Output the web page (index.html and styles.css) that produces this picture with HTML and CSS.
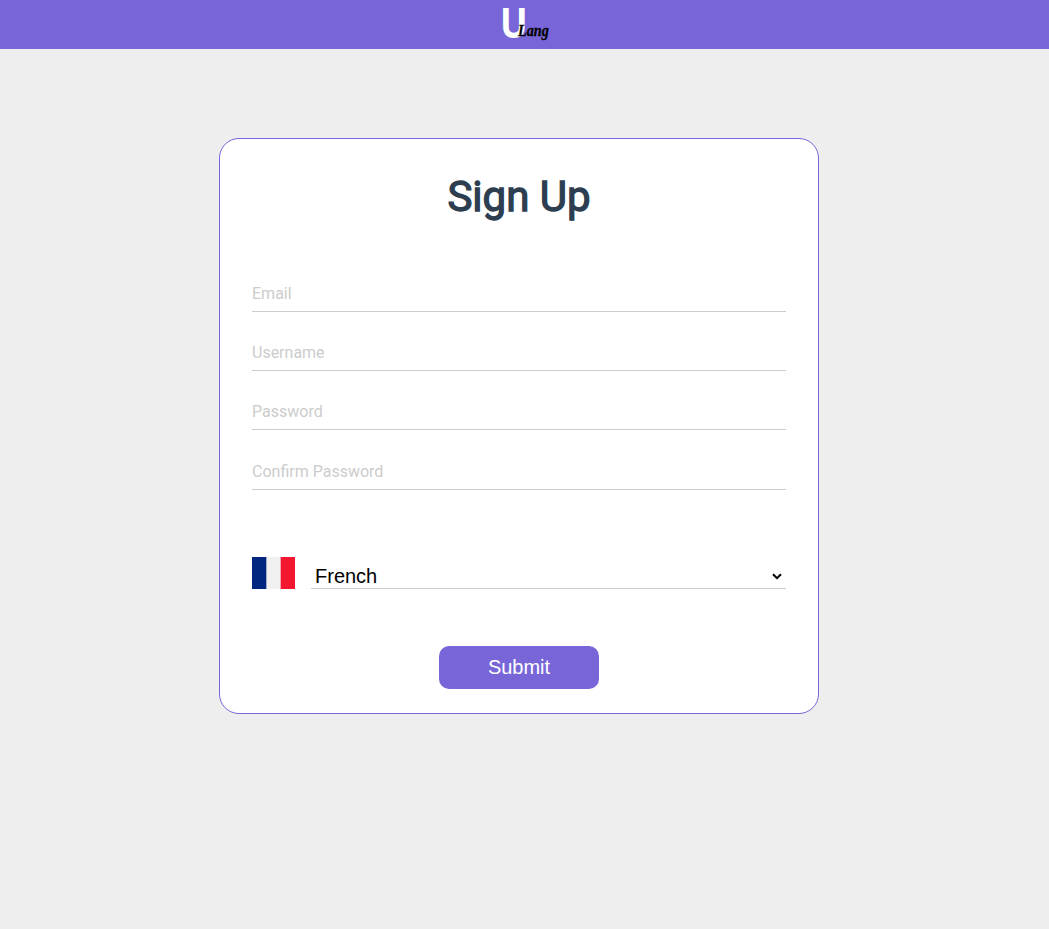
FILE: index.html
```html
<!DOCTYPE html>
<html lang="en">
<head>
<meta charset="utf-8">
<title>Sign Up</title>
<link rel="stylesheet" href="styles.css">
</head>
<body>
<header class="topbar">
  <a class="logo"><span class="logo-u">U</span><span class="logo-lang">Lang</span></a>
</header>
<main class="page">
  <form class="card">
    <h1 class="title">Sign Up</h1>
    <div class="fields">
      <input class="field" type="text" placeholder="Email">
      <input class="field" type="text" placeholder="Username">
      <input class="field" type="password" placeholder="Password">
      <input class="field field-last" type="password" placeholder="Confirm Password">
    </div>
    <div class="language">
      <svg class="flag" viewBox="0 0 43 32" width="43" height="32">
        <rect width="43" height="32" fill="#f0f0f0"/>
        <rect width="14.33" height="32" fill="#00267f"/>
        <rect x="28.67" width="14.33" height="32" fill="#f31830"/>
      </svg>
      <div class="select-wrap">
        <select class="select"><option>French</option></select>
        <svg class="chevron" viewBox="0 0 10 7" width="10" height="7"><path d="M1 1.2 5 5.2 9 1.2" fill="none" stroke="#000" stroke-width="2"/></svg>
      </div>
    </div>
    <button class="submit" type="button">Submit</button>
  </form>
</main>
</body>
</html>
```
FILE: styles.css
```css
* { box-sizing: border-box; }
body {
  margin: 0;
  min-height: 929px;
  background: #eee;
  font-family: Roboto, sans-serif;
}
.topbar {
  height: 49px;
  background: #7866d8;
  display: flex;
  justify-content: center;
}
.logo {
  position: relative;
  width: 49px;
  height: 49px;
}
.logo-u {
  position: absolute;
  left: 0;
  top: 0;
  font: 700 42px/44px "Open Sans", sans-serif;
  transform: scaleX(.87);
  transform-origin: 0 50%;
  color: #fff;
}
.logo-lang {
  position: absolute;
  left: 18px;
  top: 19px;
  font: italic 700 17px/24px "Liberation Serif", serif;
  transform: scaleX(.84);
  transform-origin: 0 50%;
  -webkit-text-stroke: .3px #000;
  color: #000;
}
.page {
  display: flex;
  justify-content: center;
  padding: 89px 11px 0 0;
}
.card {
  width: 600px;
  height: 576px;
  padding: 0 32px;
  background: #fff;
  border: 1px solid #7866d8;
  border-radius: 20px;
  display: flex;
  flex-direction: column;
}
.title {
  margin: 32px 0 0;
  font-size: 42px;
  font-weight: 400;
  -webkit-text-stroke: 1.3px #2c3e50;
  line-height: 51px;
  color: #2c3e50;
  text-align: center;
}
.fields {
  margin-top: 53px;
  display: flex;
  flex-direction: column;
  gap: 22px;
}
.field {
  height: 37px;
  padding: 0;
  border: 0;
  border-bottom: 1px solid #ccc;
  outline: 0;
  font: 16px Roboto, sans-serif;
  background: transparent;
}
.field-last { margin-top: 1px; }
.field::placeholder { color: #ccc; }
.language {
  margin-top: 67px;
  display: flex;
  gap: 16px;
}
.flag { display: block; }
.select-wrap {
  position: relative;
  flex: 1;
  display: flex;
}
.select {
  width: 100%;
  height: 32px;
  padding: 6px 4px 0;
  border: 0;
  border-bottom: 1px solid #ccc;
  border-radius: 0;
  appearance: none;
  background: transparent;
  color: #000;
  font: 20px "Liberation Sans", Arial, sans-serif;
}
.chevron {
  position: absolute;
  right: 4px;
  top: 16px;
}
.submit {
  align-self: center;
  width: 160px;
  height: 43px;
  margin-top: 57px;
  padding: 0;
  border: 0;
  border-radius: 10px;
  background: #7866d8;
  color: #fff;
  font: 20px "Liberation Sans", Arial, sans-serif;
}
```
